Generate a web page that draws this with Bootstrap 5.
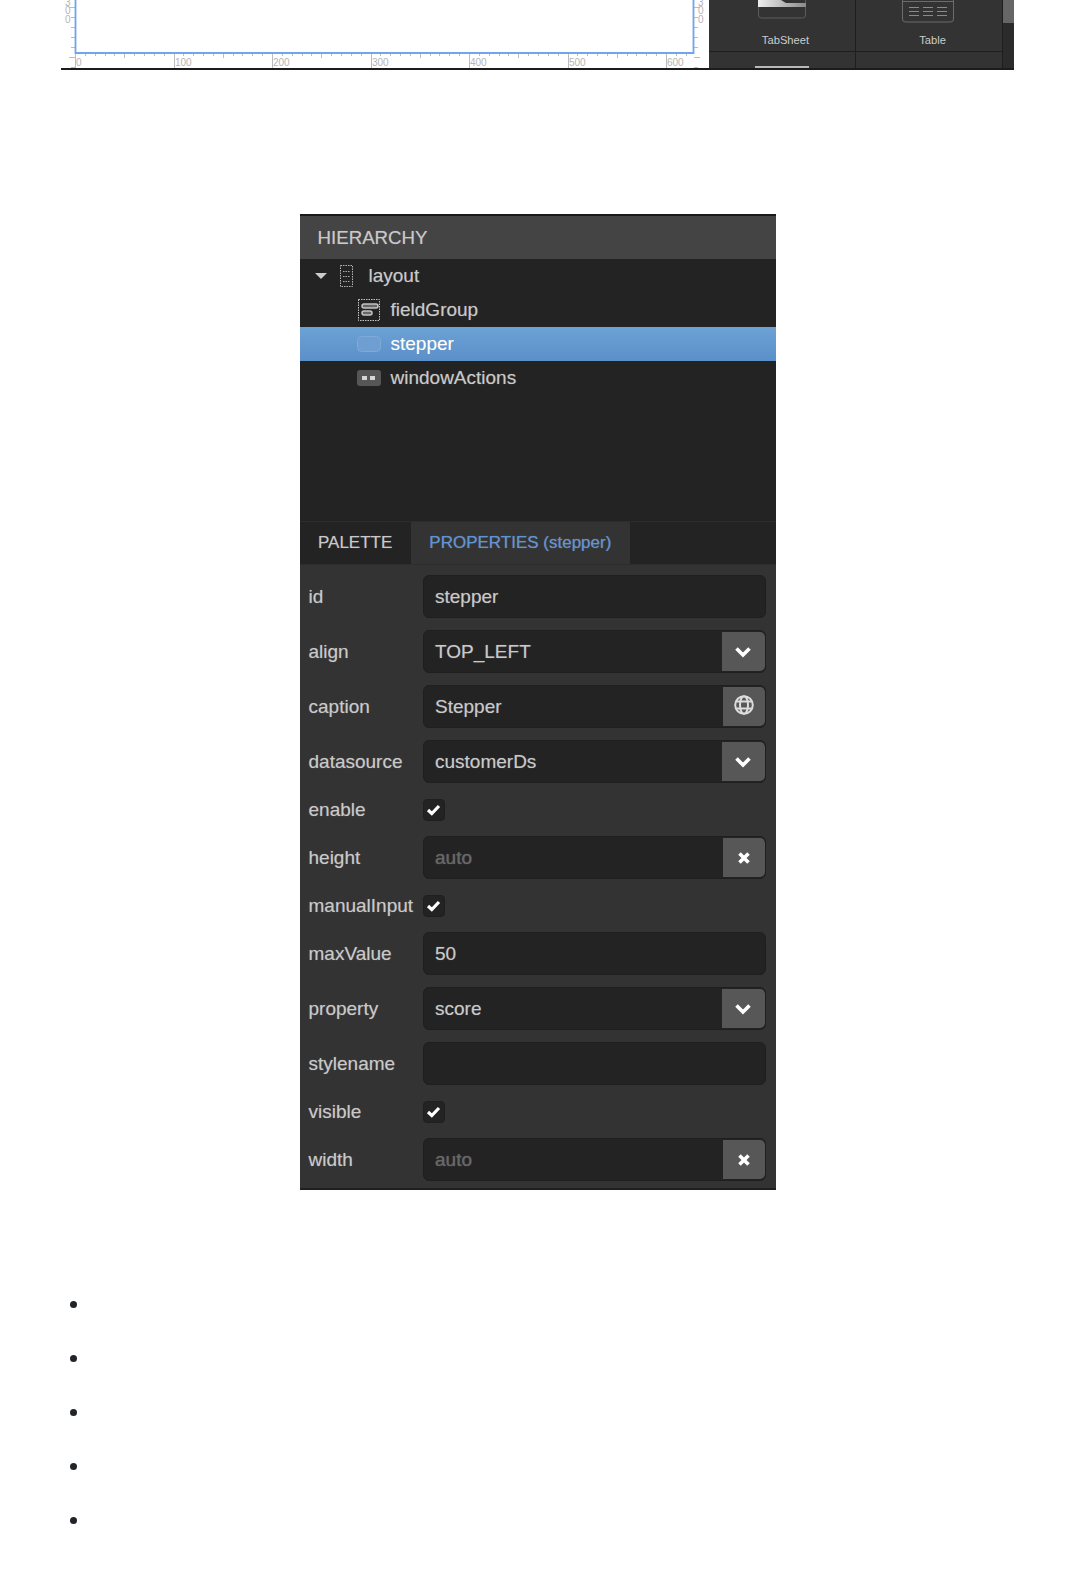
<!DOCTYPE html>
<html lang="en">
<head>
    <meta charset="UTF-8">
    <meta name="viewport" content="width=device-width, initial-scale=1.0">
    <title>Stepper properties</title>
    <link href="https://cdn.jsdelivr.net/npm/bootstrap@5.3.0/dist/css/bootstrap.min.css" rel="stylesheet">
    <script src="https://cdn.jsdelivr.net/npm/bootstrap@5.3.0/dist/js/bootstrap.bundle.min.js"></script>
    <style>
        body {
            background: #fff;
            font-family: "Liberation Sans", Arial, sans-serif;
        }
        /* top screenshot fragment */
        .studio-strip {
            width: 953px;
            height: 70px;
            margin-left: 61px;
            border-bottom: 2px solid #1c1c1c;
            overflow: hidden;
        }
        .studio-canvas {
            width: 648px;
            height: 68px;
            display: block;
            flex: none;
        }
        .studio-canvas text {
            font-family: "Liberation Sans", Arial, sans-serif;
            font-size: 10px;
            fill: #b5b5b5;
        }
        .palette-area {
            flex: 1;
            background: #333;
            color: #ccc;
            font-size: 11.2px;
        }
        .palette-cell {
            width: 147px;
            height: 52px;
            border-right: 1px solid #1e1e1e;
            border-bottom: 1px solid #1e1e1e;
        }
        .palette-cell span {
            position: absolute;
            left: 7px;
            right: 0;
            top: 34px;
            line-height: 13px;
            text-align: center;
        }
        .palette-cell svg {
            position: absolute;
            top: 0;
        }
        .palette-next {
            width: 147px;
            height: 16px;
            border-right: 1px solid #1e1e1e;
        }
        .palette-next i {
            display: block;
            width: 54px;
            height: 3px;
            margin: 14px 0 0 46px;
            background: #b9b9b9;
        }
        .palette-scroll {
            flex: 1;
            background: #2b2b2b;
        }
        .palette-thumb {
            height: 23px;
            background: #666;
        }

        /* panel */
        .studio-panel {
            width: 476px;
            margin: 144px auto 0;
            background: #333;
            border-top: 2px solid #1a1a1a;
            border-bottom: 2px solid #1f1f1f;
            color: #c9c9c9;
            font-size: 19px;
            text-shadow: 0 0 1px rgba(200, 200, 200, .45);
        }
        .panel-head {
            height: 43px;
            padding-left: 18px;
            line-height: 44px;
            font-size: 18.7px;
            background: #444;
        }
        .tree-box {
            height: 262px;
            background: #232323;
        }
        .tree-row {
            height: 34px;
        }
        .tree-row svg {
            flex: none;
        }
        .tree-row.level-2 {
            padding-left: 57px;
        }
        .tree-row.level-2 svg {
            margin-right: 10px;
        }
        .tree-row.picked {
            background: linear-gradient(#6da2d6, #5a8fc9);
            color: #fff;
        }
        .tree-row.level-1 {
            padding-left: 15px;
        }
        .tree-arrow {
            margin-right: 10px;
        }
        .tree-layout-icon {
            margin-right: 15px;
        }
        .panel-tabs {
            height: 44px;
            background: #232323;
            border-top: 1px solid #2c2c2c;
            border-bottom: 1px solid #2c2c2c;
            font-size: 17px;
        }
        .panel-tab {
            padding: 0 18.5px;
            line-height: 42px;
        }
        .panel-tab.on {
            background: #333;
            color: #5d94d8;
        }
        .prop-list {
            padding: 10px 10px 7px 9px;
            gap: 12px;
        }
        .prop-name {
            width: 114px;
            flex: none;
            padding-top: 1px;
        }
        .prop-row {
            height: 43px;
        }
        .prop-row.tick-row {
            height: 29px;
        }
        .prop-group {
            height: 43px;
            flex: 1;
            background: #232323;
            border: 1px solid #1f1f1f;
            border-radius: 6px;
            overflow: hidden;
        }
        .prop-group .prop-value {
            flex: 1;
            padding: 1px 0 0 11.5px;
            color: #c9c9c9;
        }
        .prop-group .prop-value.faint {
            color: #666;
        }
        .prop-btn {
            width: 42px;
            margin: 1px 0;
            background: #575757;
            border-radius: 0 5px 5px 0;
        }
        .prop-btn.wide {
            width: 43px;
        }
        .tick-box {
            width: 22px;
            height: 22px;
            background: #232323;
            border: 1px solid #1f1f1f;
            border-radius: 4px;
        }

        /* list of empty items */
        .bare-list {
            margin: 86px 0 0;
            padding-left: 91px;
            font-size: 24px;
        }
        .bare-list li {
            height: 54px;
            line-height: 54px;
        }
    </style>
</head>
<body>

<!-- top of the page, cut off screenshot -->
<div class="studio-strip d-flex">
    <svg class="studio-canvas" viewBox="0 0 648 68">
        <rect width="648" height="68" fill="#fff"/>
        <path id="rulerTicks" d="" stroke="#bcbcbc" fill="none"/>
        <path d="M14.5 0V53H632.5V0" stroke="#6ea5ee" stroke-width="1.8" fill="none"/>
        <text x="4" y="6">3</text><text x="4" y="14">0</text><text x="4" y="23">0</text>
        <text x="637" y="6">3</text><text x="637" y="14">0</text><text x="637" y="23">0</text>
        <text x="15" y="66">0</text><text x="114" y="66">100</text><text x="212" y="66">200</text>
        <text x="311" y="66">300</text><text x="409" y="66">400</text><text x="508" y="66">500</text>
        <text x="606" y="66">600</text>
    </svg>
    <div class="palette-area d-flex">
        <div>
            <div class="d-flex">
                <div class="palette-cell position-relative">
                    <svg width="146" height="34" viewBox="0 0 146 34">
                        <defs><linearGradient id="tabFill" x1="0" x2="1"><stop offset="0" stop-color="#eee"/><stop offset="1" stop-color="#8b8b8b"/></linearGradient></defs>
                        <rect x="49.5" y="-6" width="47" height="24" rx="3" fill="none" stroke="#5c5c5c"/>
                        <path d="M49 0H72L77 3H97V7H49Z" fill="url(#tabFill)"/>
                    </svg>
                    <span>TabSheet</span>
                </div>
                <div class="palette-cell position-relative">
                    <svg width="146" height="34" viewBox="0 0 146 34">
                        <rect x="46.5" y="-6" width="51" height="28" rx="3" fill="none" stroke="#6c6c6c"/>
                        <path d="M47 1.5H97" stroke="#6c6c6c"/>
                        <path d="M53 7.5H63M53 11.5H63M53 15.5H63M67 7.5H77M67 11.5H77M67 15.5H77M81 7.5H91M81 11.5H91M81 15.5H91" stroke="#8a8a8a"/>
                    </svg>
                    <span>Table</span>
                </div>
            </div>
            <div class="d-flex">
                <div class="palette-next"><i></i></div>
                <div class="palette-next"></div>
            </div>
        </div>
        <div class="palette-scroll"><div class="palette-thumb"></div></div>
    </div>
</div>

<!-- hierarchy + properties panel -->
<div class="studio-panel">
    <div class="panel-head">HIERARCHY</div>

    <div class="tree-box">
        <div class="tree-row level-1 d-flex align-items-center">
            <svg class="tree-arrow" width="13" height="8" viewBox="0 0 13 8"><path d="M0 1H12L6 7Z" fill="#ccc"/></svg>
            <svg class="tree-layout-icon" width="16" height="24" viewBox="0 0 16 24">
                <rect x="2.5" y="1.5" width="12" height="21" fill="none" stroke="#b5b5b5" stroke-dasharray="1.5 1"/>
                <path d="M5 7.5H12M5 12.5H12M5 17.5H12" stroke="#aaa" stroke-dasharray="1.5 1"/>
            </svg>
            <span>layout</span>
        </div>
        <div class="tree-row level-2 d-flex align-items-center">
            <svg width="24" height="24" viewBox="0 0 24 24">
                <rect x="1.5" y="1.5" width="21" height="21" fill="none" stroke="#c4c4c4" stroke-dasharray="1.5 1"/>
                <rect x="5" y="6" width="16" height="4" rx="2" fill="#666" stroke="#c4c4c4" stroke-width="1.5"/>
                <rect x="5" y="13" width="10" height="4" rx="2" fill="#666" stroke="#c4c4c4" stroke-width="1.5"/>
            </svg>
            <span>fieldGroup</span>
        </div>
        <div class="tree-row level-2 picked d-flex align-items-center">
            <svg width="24" height="24" viewBox="0 0 24 24">
                <rect x="0.5" y="4.5" width="23" height="15" rx="4" fill="#6f9fd2" stroke="#7fa9d6"/>
            </svg>
            <span>stepper</span>
        </div>
        <div class="tree-row level-2 d-flex align-items-center">
            <svg width="24" height="24" viewBox="0 0 24 24">
                <rect x="0" y="4" width="24" height="16" rx="3" fill="#565656"/>
                <rect x="5" y="10" width="5" height="4" fill="#d5d5d5"/>
                <rect x="13" y="10" width="5" height="4" fill="#d5d5d5"/>
            </svg>
            <span>windowActions</span>
        </div>
    </div>

    <div class="panel-tabs d-flex">
        <div class="panel-tab">PALETTE</div>
        <div class="panel-tab on">PROPERTIES (stepper)</div>
    </div>

    <div class="prop-list d-flex flex-column">
        <div class="prop-row d-flex align-items-center">
            <div class="prop-name">id</div>
            <div class="prop-group d-flex"><div class="prop-value d-flex align-items-center">stepper</div></div>
        </div>
        <div class="prop-row d-flex align-items-center">
            <div class="prop-name">align</div>
            <div class="prop-group d-flex"><div class="prop-value d-flex align-items-center">TOP_LEFT</div>
                <div class="prop-btn wide d-flex align-items-center justify-content-center"><svg width="18" height="12" viewBox="0 0 18 12"><path d="M2.5 2.5L9 9L15.5 2.5" fill="none" stroke="#fff" stroke-width="3.6"/></svg></div></div>
        </div>
        <div class="prop-row d-flex align-items-center">
            <div class="prop-name">caption</div>
            <div class="prop-group d-flex"><div class="prop-value d-flex align-items-center">Stepper</div>
                <div class="prop-btn d-flex align-items-center justify-content-center"><svg class="mb-1" width="20" height="20" viewBox="0 0 20 20"><g fill="none" stroke="#dcdcdc" stroke-width="2"><circle cx="10" cy="10" r="8.8"/><ellipse cx="10" cy="10" rx="4" ry="8.8"/><path d="M2.5 6.5H17.5M2.5 13.5H17.5"/></g></svg></div></div>
        </div>
        <div class="prop-row d-flex align-items-center">
            <div class="prop-name">datasource</div>
            <div class="prop-group d-flex"><div class="prop-value d-flex align-items-center">customerDs</div>
                <div class="prop-btn wide d-flex align-items-center justify-content-center"><svg width="18" height="12" viewBox="0 0 18 12"><path d="M2.5 2.5L9 9L15.5 2.5" fill="none" stroke="#fff" stroke-width="3.6"/></svg></div></div>
        </div>
        <div class="prop-row tick-row d-flex align-items-center">
            <div class="prop-name">enable</div>
            <div class="tick-box d-flex align-items-center justify-content-center"><svg width="15" height="12" viewBox="0 0 15 12"><path d="M2 6L5.8 9.5L13 2" fill="none" stroke="#fff" stroke-width="3.2"/></svg></div>
        </div>
        <div class="prop-row d-flex align-items-center">
            <div class="prop-name">height</div>
            <div class="prop-group d-flex"><div class="prop-value faint d-flex align-items-center">auto</div>
                <div class="prop-btn d-flex align-items-center justify-content-center"><svg width="14" height="14" viewBox="0 0 14 14"><path d="M2.5 2.5L11.5 11.5M11.5 2.5L2.5 11.5" stroke="#fff" stroke-width="3.6"/></svg></div></div>
        </div>
        <div class="prop-row tick-row d-flex align-items-center">
            <div class="prop-name">manualInput</div>
            <div class="tick-box d-flex align-items-center justify-content-center"><svg width="15" height="12" viewBox="0 0 15 12"><path d="M2 6L5.8 9.5L13 2" fill="none" stroke="#fff" stroke-width="3.2"/></svg></div>
        </div>
        <div class="prop-row d-flex align-items-center">
            <div class="prop-name">maxValue</div>
            <div class="prop-group d-flex"><div class="prop-value d-flex align-items-center">50</div></div>
        </div>
        <div class="prop-row d-flex align-items-center">
            <div class="prop-name">property</div>
            <div class="prop-group d-flex"><div class="prop-value d-flex align-items-center">score</div>
                <div class="prop-btn wide d-flex align-items-center justify-content-center"><svg width="18" height="12" viewBox="0 0 18 12"><path d="M2.5 2.5L9 9L15.5 2.5" fill="none" stroke="#fff" stroke-width="3.6"/></svg></div></div>
        </div>
        <div class="prop-row d-flex align-items-center">
            <div class="prop-name">stylename</div>
            <div class="prop-group d-flex"><div class="prop-value"></div></div>
        </div>
        <div class="prop-row tick-row d-flex align-items-center">
            <div class="prop-name">visible</div>
            <div class="tick-box d-flex align-items-center justify-content-center"><svg width="15" height="12" viewBox="0 0 15 12"><path d="M2 6L5.8 9.5L13 2" fill="none" stroke="#fff" stroke-width="3.2"/></svg></div>
        </div>
        <div class="prop-row d-flex align-items-center">
            <div class="prop-name">width</div>
            <div class="prop-group d-flex"><div class="prop-value faint d-flex align-items-center">auto</div>
                <div class="prop-btn d-flex align-items-center justify-content-center"><svg width="14" height="14" viewBox="0 0 14 14"><path d="M2.5 2.5L11.5 11.5M11.5 2.5L2.5 11.5" stroke="#fff" stroke-width="3.6"/></svg></div></div>
        </div>
    </div>
</div>

<ul class="bare-list">
    <li></li>
    <li></li>
    <li></li>
    <li></li>
    <li></li>
</ul>

<script>
    // ruler ticks under and beside the canvas
    let d = '';
    for (let i = 0; i <= 62; i++) {
        const x = Math.round(14 + i * 9.85) + 0.5;
        const len = i % 10 === 0 ? 15 : (i % 5 === 0 ? 5 : 3);
        d += `M${x} 53V${53 + len}`;
    }
    for (let y = 7; y < 68; y += 10) {
        const len = (y - 7) % 50 === 0 ? 6 : 4;
        d += `M${14 - len} ${y + 0.5}H14M633 ${y + 0.5}H${633 + len}`;
    }
    document.getElementById('rulerTicks').setAttribute('d', d);
</script>

</body>
</html>
